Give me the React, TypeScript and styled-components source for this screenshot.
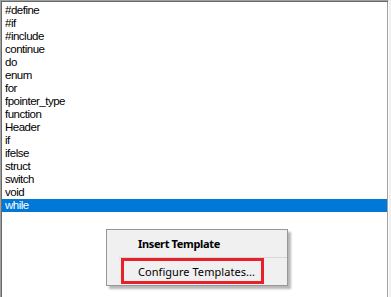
import styled, { createGlobalStyle } from "styled-components";

const items = [
  "#define",
  "#if",
  "#include",
  "continue",
  "do",
  "enum",
  "for",
  "fpointer_type",
  "function",
  "Header",
  "if",
  "ifelse",
  "struct",
  "switch",
  "void",
  "while",
];

const selected = "while";

export default function App() {
  return (
    <>
      <GlobalStyle />
      <Page>
        <ListBox>
          {items.map((name) => (
            <Row key={name} $active={name === selected}>
              {name}
            </Row>
          ))}
        </ListBox>
        <Menu>
          <MenuItem $bold>Insert Template</MenuItem>
          <Separator />
          <MenuItem>Configure Templates...</MenuItem>
          <Highlight />
        </Menu>
      </Page>
    </>
  );
}

const GlobalStyle = createGlobalStyle`
  html, body {
    margin: 0;
    padding: 0;
    background: #f0f0f0;
  }
`;

const Page = styled.div`
  position: relative;
  width: 391px;
  height: 297px;
  overflow: hidden;
  background: #f0f0f0;
`;

const ListBox = styled.div`
  width: 385px;
  height: 310px;
  background: #ffffff;
  border-top: 1px solid #a0a0a0;
  border-left: 1px solid #a0a0a0;
  border-right: 1px solid #ffffff;
  box-shadow: inset 1px 1px 0 #696969, inset -1px 0 0 #a0a0a0;
  padding: 3px 1px 0 1px;
  font-family: "Liberation Sans", Arial, sans-serif;
  font-size: 11.5px;
  letter-spacing: -0.5px;
`;

const Row = styled.div<{ $active?: boolean }>`
  height: 13px;
  line-height: 13px;
  padding-left: 3px;
  white-space: nowrap;
  color: ${(p) => (p.$active ? "#ffffff" : "#000000")};
  background: ${(p) => (p.$active ? "#0078d7" : "transparent")};
`;

const Menu = styled.div`
  position: absolute;
  left: 106px;
  top: 229px;
  width: 180px;
  height: 55px;
  background: #f0f0f0;
  border: 1px solid #979797;
  box-shadow: 3px 3px 2px rgba(0, 0, 0, 0.28);
  display: flex;
  flex-direction: column;
  font-family: "Noto Sans", "Open Sans", sans-serif;
  font-size: 11px;
  color: #000000;
`;

const MenuItem = styled.div<{ $bold?: boolean }>`
  height: 27px;
  display: flex;
  align-items: center;
  padding-left: 31px;
  font-weight: ${(p) => (p.$bold ? 700 : 400)};
  letter-spacing: ${(p) => (p.$bold ? "-0.35px" : "0.05px")};
`;

const Separator = styled.div`
  height: 1px;
  margin-left: 12px;
  background: #d7d7d7;
`;

const Highlight = styled.div`
  position: absolute;
  left: 14px;
  top: 28px;
  width: 137px;
  height: 20px;
  border: 3px solid #e8202a;
`;
